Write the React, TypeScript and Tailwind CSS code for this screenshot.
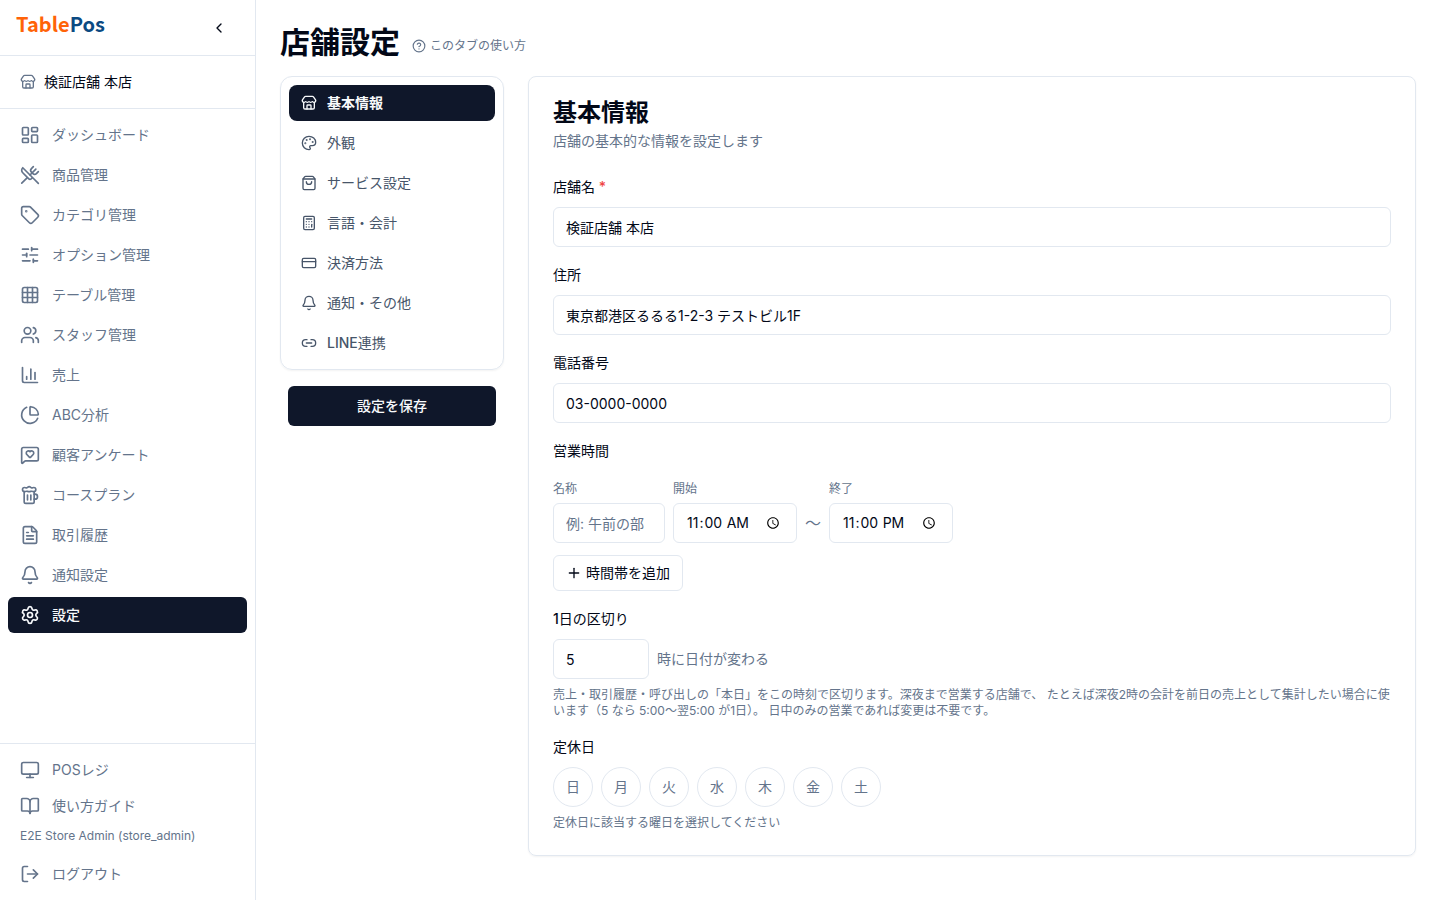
import React from "react";
import {
  Bell, BookOpen, Calculator, ChartColumn, ChartPie, ChevronLeft, CircleQuestionMark, CreditCard, Beer,
  FileText, Grid3x3, LayoutDashboard, Link2, LogOut, MessageSquareHeart, Monitor, Palette, Plus, Settings,
  ShoppingBag, SlidersHorizontal, Store, Tag, Users, UtensilsCrossed,
} from "lucide-react";

type Icon = React.ComponentType<{ className?: string }>;
type Item = { label: string; icon: Icon };

const navItems: Item[] = [
  { label: "ダッシュボード", icon: LayoutDashboard },
  { label: "商品管理", icon: UtensilsCrossed },
  { label: "カテゴリ管理", icon: Tag },
  { label: "オプション管理", icon: SlidersHorizontal },
  { label: "テーブル管理", icon: Grid3x3 },
  { label: "スタッフ管理", icon: Users },
  { label: "売上", icon: ChartColumn },
  { label: "ABC分析", icon: ChartPie },
  { label: "顧客アンケート", icon: MessageSquareHeart },
  { label: "コースプラン", icon: Beer },
  { label: "取引履歴", icon: FileText },
  { label: "通知設定", icon: Bell },
  { label: "設定", icon: Settings },
];

const tabs: (Item & { prefix?: string })[] = [
  { label: "基本情報", icon: Store },
  { label: "外観", icon: Palette },
  { label: "サービス設定", icon: ShoppingBag },
  { label: "言語・会計", icon: Calculator },
  { label: "決済方法", icon: CreditCard },
  { label: "通知・その他", icon: Bell },
  { prefix: "LINE", label: "連携", icon: Link2 },
];

const days = ["日", "月", "火", "水", "木", "金", "土"];

const inputClass = "h-10 rounded-md border border-[#e2e8f0] bg-white px-3 py-2 text-sm text-[#020817] placeholder:text-[#64748b]";

function NavLink({ item, active = false }: { item: Item; active?: boolean }) {
  const Glyph = item.icon;
  return (
    <a
      href="#"
      aria-current={active ? "page" : undefined}
      className={`flex h-9 items-center gap-3 rounded-md px-3 text-sm ${active ? "bg-[#0f172a] font-medium text-[#f8fafc]" : "text-[#64748b]"}`}
    >
      <Glyph className="size-5 shrink-0" />
      {item.label}
    </a>
  );
}

function Sidebar() {
  return (
    <aside className="sticky top-0 flex h-screen w-64 shrink-0 flex-col border-r border-[#e2e8f0]">
      <div className="flex h-14 shrink-0 items-center justify-between border-b border-[#e2e8f0] px-4">
        <a href="#" className="pb-2 font-['Noto_Sans_CJK_JP',sans-serif] text-xl leading-7 font-bold text-[#ff6308]">
          Table<span className="text-[#0b4a82]">Pos</span>
        </a>
        <button type="button" aria-label="メニューを閉じる" className="flex size-10 items-center justify-center">
          <ChevronLeft className="size-4" />
        </button>
      </div>
      <div className="flex h-[53px] shrink-0 items-center gap-2 border-b border-[#e2e8f0] px-5 text-sm">
        <Store className="size-4 text-[#64748b]" />
        検証店舗 本店
      </div>
      <nav className="flex flex-1 flex-col gap-1 overflow-y-auto p-2">
        {navItems.map((item, i) => (
          <NavLink key={item.label} item={item} active={i === navItems.length - 1} />
        ))}
      </nav>
      <div className="flex flex-col border-t border-[#e2e8f0] p-2">
        <NavLink item={{ label: "POSレジ", icon: Monitor }} />
        <NavLink item={{ label: "使い方ガイド", icon: BookOpen }} />
        <p className="mb-2 px-3 py-1 text-xs text-[#64748b]">E2E Store Admin (store_admin)</p>
        <button type="button" className="flex h-9 items-center gap-3 rounded-md px-3 text-sm text-[#64748b]">
          <LogOut className="size-5" />
          ログアウト
        </button>
      </div>
    </aside>
  );
}

function Field({ id, label, value, required = false }: { id: string; label: string; value: string; required?: boolean }) {
  return (
    <div className="flex flex-col gap-2">
      <label htmlFor={id} className="text-sm leading-6">
        {label}
        {required && <span className="font-medium text-[#ef4444]"> *</span>}
      </label>
      <input id={id} type="text" defaultValue={value} className={`${inputClass} w-full`} />
    </div>
  );
}

function TimeField({ id, label, value }: { id: string; label: string; value: string }) {
  return (
    <div className="flex flex-col gap-1">
      <label htmlFor={id} className="text-xs leading-5 text-[#64748b]">{label}</label>
      <input id={id} type="time" defaultValue={value} className={`${inputClass} w-31`} />
    </div>
  );
}

export default function App() {
  return (
    <div className="flex min-h-screen bg-white font-['Inter','Noto_Sans_CJK_JP',sans-serif] text-[#020817]">
      <Sidebar />
      <main className="min-w-0 flex-1 p-6">
        <header className="mb-4 flex items-center gap-3">
          <h1 className="text-3xl leading-9 font-bold">店舗設定</h1>
          <a href="#" className="flex items-center gap-1 pt-2 text-xs text-[#64748b]">
            <CircleQuestionMark className="size-3.5" />
            このタブの使い方
          </a>
        </header>
        <div className="flex items-start gap-6">
          <div className="w-56 shrink-0">
            <nav className="flex flex-col gap-1 rounded-xl border border-[#e2e8f0] p-2 shadow-xs">
              {tabs.map(({ prefix, label, icon: Glyph }, i) => (
                <button
                  key={label}
                  type="button"
                  className={`flex h-9 items-center gap-2.5 rounded-lg px-3 text-sm ${i === 0 ? "bg-[#0f172a] font-bold text-[#f8fafc]" : "text-[#475569]"}`}
                >
                  <Glyph className="size-4" />
                  <span>
                    {prefix && <span className="font-medium">{prefix}</span>}
                    {label}
                  </span>
                </button>
              ))}
            </nav>
            <div className="px-2 pt-4">
              <button type="button" className="h-10 w-full rounded-md bg-[#0f172a] text-sm font-medium text-[#f8fafc]">設定を保存</button>
            </div>
          </div>
          <section className="min-w-0 flex-1 rounded-lg border border-[#e2e8f0] p-6 shadow-xs">
            <h2 className="text-2xl leading-6 font-bold">基本情報</h2>
            <p className="mt-1.5 mb-6 text-sm text-[#64748b]">店舗の基本的な情報を設定します</p>
            <form className="flex flex-col gap-4">
              <Field id="name" label="店舗名" value="検証店舗 本店" required />
              <Field id="address" label="住所" value="東京都港区るるる1-2-3 テストビル1F" />
              <Field id="phone" label="電話番号" value="03-0000-0000" />
              <fieldset>
                <legend className="text-sm leading-6">営業時間</legend>
                <div className="flex items-end gap-2 pt-4">
                  <div className="flex flex-col gap-1">
                    <label htmlFor="slot" className="text-xs leading-5 text-[#64748b]">名称</label>
                    <input id="slot" type="text" placeholder="例: 午前の部" className={`${inputClass} w-28`} />
                  </div>
                  <TimeField id="open" label="開始" value="11:00" />
                  <span className="flex h-10 items-center text-[#64748b]">〜</span>
                  <TimeField id="close" label="終了" value="23:00" />
                </div>
                <button type="button" className="mt-3 flex h-9 items-center gap-1 rounded-md border border-[#e2e8f0] px-3 text-sm">
                  <Plus className="size-4" />
                  時間帯を追加
                </button>
              </fieldset>
              <div className="flex flex-col gap-2">
                <label htmlFor="cutoff" className="text-sm leading-6">
                  <span className="font-medium">1</span>日の区切り
                </label>
                <div className="flex items-center gap-2">
                  <input id="cutoff" type="number" defaultValue={5} className={`${inputClass} w-24`} />
                  <span className="text-sm text-[#64748b]">時に日付が変わる</span>
                </div>
                <p className="text-xs text-[#64748b]">
                  売上・取引履歴・呼び出しの「本日」をこの時刻で区切ります。深夜まで営業する店舗で、 たとえば深夜2時の会計を前日の売上として集計したい場合に使います（5 なら 5:00〜翌5:00 が1日）。 日中のみの営業であれば変更は不要です。
                </p>
              </div>
              <fieldset>
                <legend className="text-sm leading-6">定休日</legend>
                <div className="flex flex-wrap gap-2 pt-2">
                  {days.map((d) => (
                    <button key={d} type="button" className="size-10 rounded-full border border-[#e2e8f0] text-sm text-[#64748b]">{d}</button>
                  ))}
                </div>
                <p className="mt-2 text-xs text-[#64748b]">定休日に該当する曜日を選択してください</p>
              </fieldset>
            </form>
          </section>
        </div>
      </main>
    </div>
  );
}
